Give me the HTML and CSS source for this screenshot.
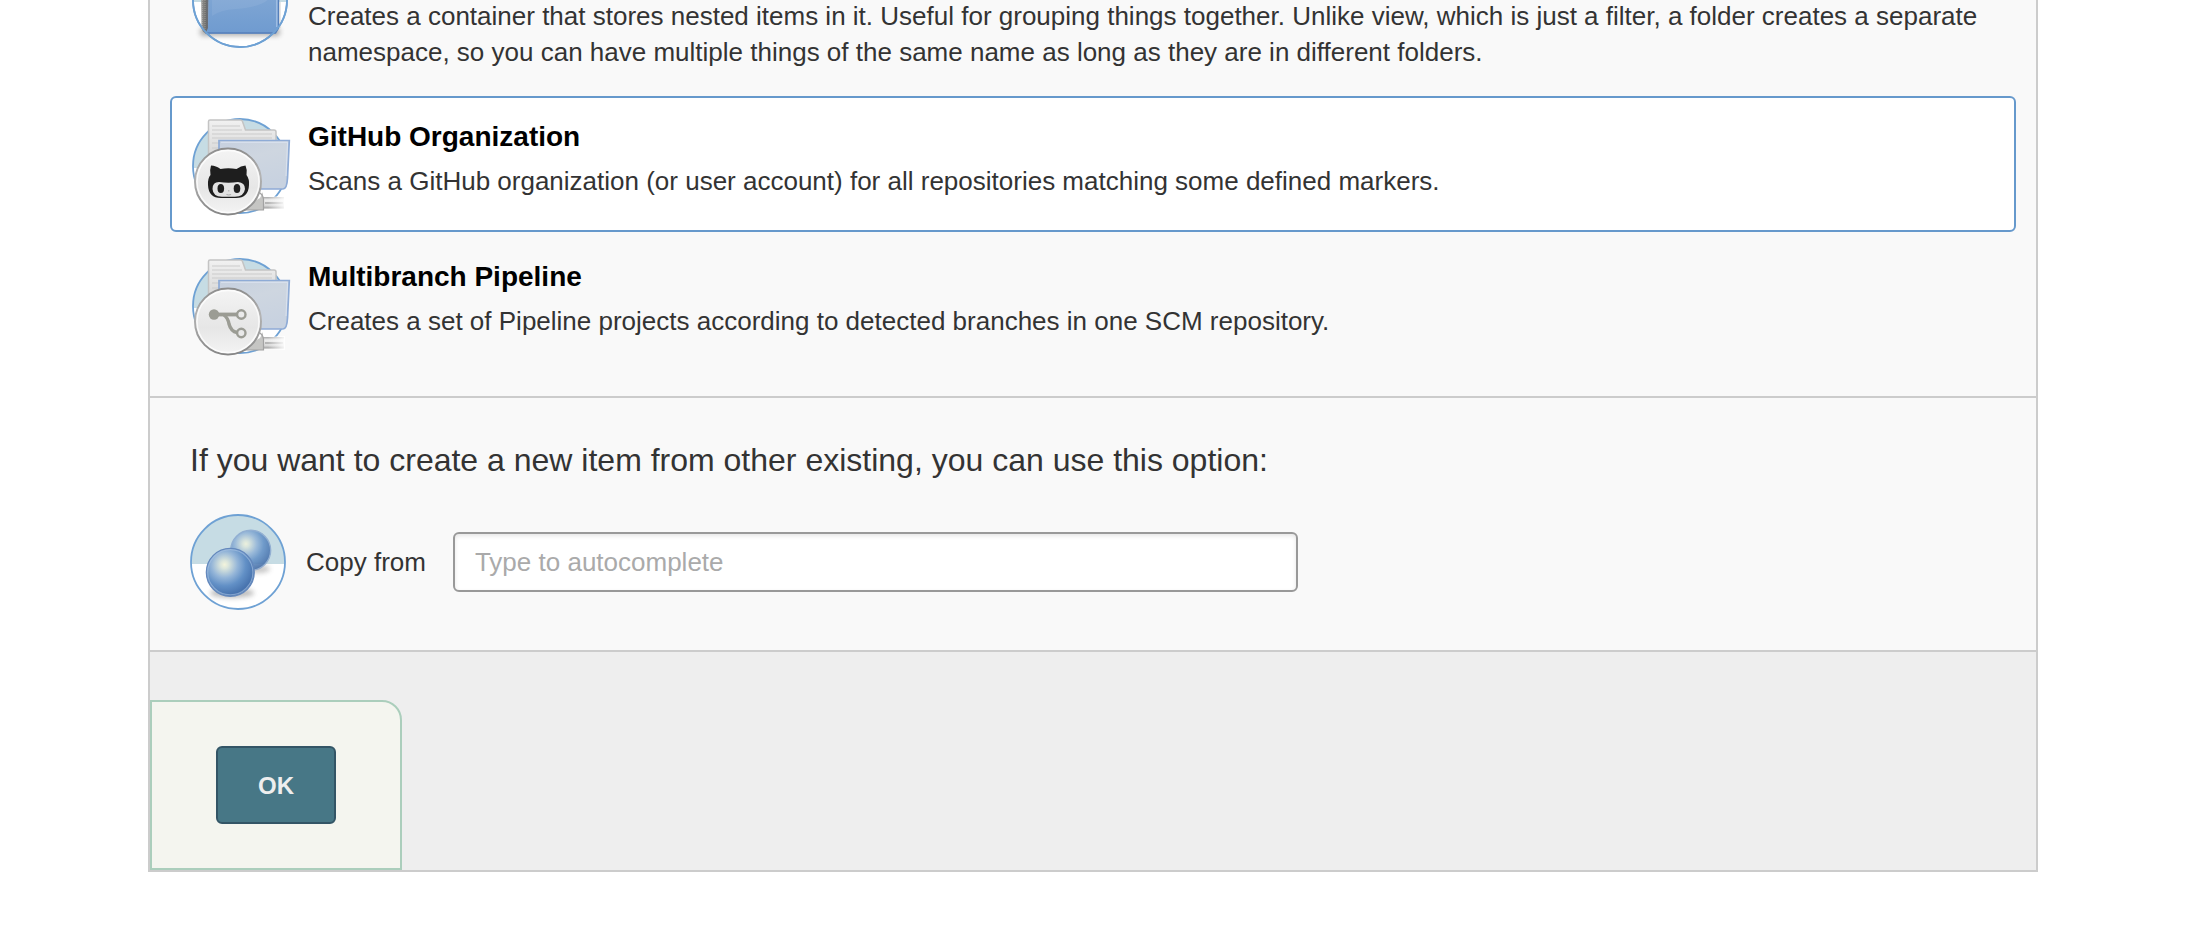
FILE: index.html
```html
<!DOCTYPE html>
<html lang="en">
<head>
<meta charset="utf-8">
<title>New Item</title>
<link rel="stylesheet" href="styles.css">
</head>
<body>
<svg class="defs" width="0" height="0" aria-hidden="true">
  <defs>
    <clipPath id="disc"><circle cx="48" cy="48" r="47"/></clipPath>
    <filter id="soft" x="-30%" y="-80%" width="160%" height="260%"><feGaussianBlur stdDeviation="2.5"/></filter>
    <linearGradient id="paper" x1="0" y1="0" x2="0" y2="1">
      <stop offset="0" stop-color="#f1f1f1"/><stop offset=".5" stop-color="#d9d9d9"/><stop offset="1" stop-color="#cfcfcf"/>
    </linearGradient>
    <linearGradient id="pane" x1="0" y1="0" x2=".4" y2="1">
      <stop offset="0" stop-color="#c6d0df"/><stop offset=".45" stop-color="#ced6e0"/><stop offset="1" stop-color="#c8d2e0"/>
    </linearGradient>
    <linearGradient id="badge" x1="0" y1="0" x2="0" y2="1">
      <stop offset="0" stop-color="#f4f4f4"/><stop offset=".6" stop-color="#e6e6e6"/><stop offset="1" stop-color="#f4f4f4"/>
    </linearGradient>
    <linearGradient id="rim" x1="0" y1="0" x2="0" y2="1">
      <stop offset="0" stop-color="#8c8c8c"/><stop offset=".4" stop-color="#b4b4b4"/><stop offset="1" stop-color="#868686"/>
    </linearGradient>
    <linearGradient id="pipe" x1="0" y1="0" x2="0" y2="1">
      <stop offset="0" stop-color="#a8a8a8"/><stop offset=".25" stop-color="#eeeeee"/><stop offset=".75" stop-color="#d8d8d8"/><stop offset="1" stop-color="#9c9c9c"/>
    </linearGradient>
    <linearGradient id="fade" x1="0" y1="0" x2="1" y2="0">
      <stop offset="0" stop-color="#fff" stop-opacity="0"/><stop offset="1" stop-color="#fff"/>
    </linearGradient>
    <linearGradient id="cover" x1="0" y1="0" x2="0" y2="1">
      <stop offset="0" stop-color="#8aadd6"/><stop offset="1" stop-color="#6f9bd0"/>
    </linearGradient>
    <linearGradient id="spine" x1="0" y1="0" x2="1" y2="0">
      <stop offset="0" stop-color="#9a9a98"/><stop offset=".6" stop-color="#6d6d6b"/><stop offset="1" stop-color="#666f80"/>
    </linearGradient>
    <radialGradient id="ball" cx=".38" cy=".34" r=".68">
      <stop offset="0" stop-color="#f3f4dc"/><stop offset=".12" stop-color="#dce6dc"/><stop offset=".4" stop-color="#94b5d8"/><stop offset=".65" stop-color="#6290c6"/><stop offset="1" stop-color="#416ca8"/>
    </radialGradient>
    <g id="plate">
      <circle cx="48" cy="48" r="47" fill="#fff"/>
      <path d="M0 0H96V50H0Z" fill="#c6dce4" clip-path="url(#disc)"/>
      <circle cx="48" cy="48" r="47" fill="none" stroke="#6ea1d4" stroke-width="1.8"/>
    </g>
    <g id="multi">
      <use href="#plate"/>
      <path d="M16.5 3.5q0-1.5 1.5-1.5H48.500q1.500 0 2 1.500L53.500 12H82q2 0 2 2V70H16.500Z" fill="url(#paper)" stroke="#c4c4c4" stroke-width="1.500"/>
      <path d="M20 8H48M20 12H50M20 16H80M20 20H80M20 25H28M20 30H28" stroke="#cbcbcb" stroke-width="1.200"/>
      <path d="M27 22.500H97.300L95.500 60Q95 71 91 71H27Z" fill="url(#pane)" stroke="#8eabd6" stroke-width="1.700"/>
      <path d="M29 24.300H95.500L94 58" fill="none" stroke="#dbe3ef" stroke-width="1"/>
      <path d="M58 86L68 80L71 74V92H54Z" fill="#c5c5c3"/>
      <rect x="71" y="79" width="21" height="11.500" fill="url(#pipe)"/>
      <rect x="73" y="84" width="18" height="2" fill="#b5b5b5"/>
      <rect x="76" y="78" width="17" height="14" fill="url(#fade)" opacity=".9"/>
      <path d="M68 75q3 2 3.500 6v11H52" fill="none" stroke="#a2a2a2" stroke-width="1.200"/>
      <circle cx="36" cy="63.500" r="33" fill="url(#badge)" stroke="url(#rim)" stroke-width="2"/>
      <circle cx="36" cy="63.500" r="31" fill="none" stroke="#fff" stroke-opacity=".75" stroke-width="1.500"/>
    </g>
  </defs>
</svg>

<main class="panel">
  <ul class="kinds">
    <li class="kind kind-top">
      <input class="kind-radio" type="radio" name="kind" id="kind-folder">
      <svg class="icon icon-half" viewBox="0 45 96 51" aria-hidden="true">
        <use href="#plate"/>
        <rect x="8" y="76" width="80" height="8" rx="3" fill="#555" opacity=".45" filter="url(#soft)"/>
        <path d="M9 20H17L16.500 81.500H14Q10 80 9.500 76Z" fill="url(#spine)"/>
        <path d="M10.500 20V77M13 20V79" stroke="#b5b5b2" stroke-width=".6" stroke-dasharray="1 1"/>
        <path d="M17 20H86V76L83 81.500H13.500L16 76Z" fill="url(#cover)"/>
        <path d="M20 60V45H78Q72 55 44 57Q28 58 20 64Z" fill="#fff" opacity=".07"/>
        <path d="M13.500 81H83.500L86.500 76V20" fill="none" stroke="#557fbb" stroke-width="1.500"/>
        <path d="M84.800 20V75" stroke="#a8c4e6" stroke-width="1.200"/>
        <path d="M88 50V76" stroke="#ccc" stroke-width="1.500" opacity=".6"/>
        <circle cx="48" cy="48" r="47" fill="none" stroke="#6ea1d4" stroke-width="1.800"/>
      </svg>
      <div class="kind-text">
        <label class="desc" for="kind-folder">Creates a container that stores nested items in it. Useful for grouping things together. Unlike view, which is just a filter, a folder creates a separate namespace, so you can have multiple things of the same name as long as they are in different folders.</label>
      </div>
    </li>
    <li class="kind kind-selected">
      <input class="kind-radio" type="radio" name="kind" id="kind-github" checked>
      <svg class="icon" viewBox="0 0 96 96" aria-hidden="true">
        <use href="#multi"/>
        <path d="M19 47.500Q24 47.500 28.500 51Q36 49.300 44.500 51Q49 47.500 53.500 47.500Q55.500 52 54.500 57Q57.500 61 57 67Q56.500 80 44 80H29Q16.500 80 16 67Q15.700 60 18.500 57Q17.500 52 19 47.500Z" fill="#1e1e1e"/>
        <path d="M27 64Q36.500 65.500 46 64Q53 64.500 53 71Q52 78.700 43 78.700H30Q21 78.700 20.500 71Q20.500 64 27 64Z" fill="#e2e2e2"/>
        <ellipse cx="28.800" cy="70.500" rx="3.300" ry="4.500" fill="#1e1e1e"/>
        <ellipse cx="45" cy="70.500" rx="3.300" ry="4.500" fill="#1e1e1e"/>
        <path d="M36.800 72V73.500M34.500 76.500q2.300 1 4.600 0" stroke="#aaa" stroke-width="1" fill="none"/>
      </svg>
      <label class="kind-text" for="kind-github">
        <span class="name">GitHub Organization</span>
        <span class="desc">Scans a GitHub organization (or user account) for all repositories matching some defined markers.</span>
      </label>
    </li>
    <li class="kind">
      <input class="kind-radio" type="radio" name="kind" id="kind-multibranch">
      <svg class="icon" viewBox="0 0 96 96" aria-hidden="true">
        <use href="#multi"/>
        <g fill="none" stroke="#9b9c94" stroke-width="3.400">
          <path d="M22 56.500H45" stroke-width="3.800"/>
          <path d="M32 57Q36 60 37 66Q39 73.500 45 74.500"/>
          <circle cx="49.300" cy="56.500" r="4.200" stroke-width="2.400"/>
          <circle cx="49.300" cy="75" r="4.200" stroke-width="2.400"/>
        </g>
        <circle cx="22" cy="56.500" r="5.200" fill="#9b9c94"/>
      </svg>
      <label class="kind-text" for="kind-multibranch">
        <span class="name">Multibranch Pipeline</span>
        <span class="desc">Creates a set of Pipeline projects according to detected branches in one SCM repository.</span>
      </label>
    </li>
  </ul>

  <section class="copy">
    <h2 class="copy-title">If you want to create a new item from other existing, you can use this option:</h2>
    <div class="copy-row">
      <svg class="icon" viewBox="0 0 96 96" aria-hidden="true">
        <use href="#plate"/>
        <ellipse cx="68" cy="55" rx="12" ry="4" fill="#444" opacity=".3" filter="url(#soft)"/>
        <circle cx="60.700" cy="36.300" r="20" fill="url(#ball)" stroke="#8aa8cf" stroke-width="1.400" opacity=".85"/>
        <ellipse cx="42" cy="79" rx="22" ry="5" fill="#444" opacity=".35" filter="url(#soft)"/>
        <circle cx="40.300" cy="58.300" r="24" fill="url(#ball)" stroke="#6488bc" stroke-width="1.200"/>
        <circle cx="40.300" cy="58.300" r="22.600" fill="none" stroke="#a9c3e2" stroke-opacity=".6" stroke-width="1.200"/>
      </svg>
      <label class="copy-label" for="from">Copy from</label>
      <input class="copy-input" type="text" id="from" placeholder="Type to autocomplete">
    </div>
  </section>

  <footer class="actions">
    <div class="actions-box">
      <button class="ok" type="submit">OK</button>
    </div>
  </footer>
</main>
</body>
</html>
```
FILE: styles.css
```css
* {
  box-sizing: border-box;
}

body {
  margin: 0;
  background: #fff;
  color: #333;
  font: 26px/36px "Liberation Sans", Arial, sans-serif;
}

.defs {
  position: absolute;
}

.panel {
  margin: -3px 166px 72px 148px;
  border: 2px solid #ccc;
  border-top: 0;
  background: #f9f9f9;
}

.kinds {
  display: flex;
  flex-direction: column;
  gap: 4px;
  margin: 0;
  padding: 0 20px 24px;
  list-style: none;
}

.kind {
  position: relative;
  display: flex;
  gap: 20px;
  min-height: 136px;
  padding: 20px 20px 16px;
  border: 2px solid transparent;
  border-radius: 6px;
}

.kind-top {
  min-height: 95px;
  padding-top: 0;
  border-top: 0;
}

.kind-selected {
  border-color: #69c;
  background: #fff;
}

.kind-radio {
  position: absolute;
  inset: 0;
  width: 100%;
  height: 100%;
  margin: 0;
  opacity: 0;
}

.icon {
  flex: none;
  width: 96px;
  height: 96px;
  overflow: visible;
}

.icon-half {
  height: 51px;
  overflow: hidden;
}

.kind-text {
  display: flex;
  flex: 1;
  flex-direction: column;
  gap: 8px;
  padding-top: 1px;
}

.name {
  color: #000;
  font-size: 28px;
  font-weight: bold;
}

.copy {
  padding: 40px;
  border-top: 2px solid #ccc;
}

.copy-title {
  margin: 0 0 32px;
  font-size: 32px;
  font-weight: normal;
  line-height: 44px;
}

.copy-row {
  display: flex;
  align-items: center;
  gap: 20px;
}

.copy-label {
  margin-right: 7px;
}

.copy-input {
  width: 845px;
  height: 60px;
  padding: 0 20px;
  border: 2px solid #999;
  border-radius: 6px;
  background: #fff;
  box-shadow: inset 0 2px 4px rgba(0, 0, 0, 0.1);
  color: #333;
  font: inherit;
}

.copy-input::placeholder {
  color: #aaa;
  opacity: 1;
}

.actions {
  display: flex;
  padding-top: 48px;
  border-top: 2px solid #ccc;
  background: #eee;
}

.actions-box {
  padding: 44px 64px;
  border: 2px solid #abcebc;
  border-top-right-radius: 20px;
  background: #f4f5ef;
}

.ok {
  display: block;
  width: 120px;
  height: 78px;
  padding: 2px 0 0;
  border: 2px solid #356;
  border-radius: 6px;
  background: #477786;
  color: #eee;
  font: bold 24px/36px "Liberation Sans", Arial, sans-serif;
}
```
